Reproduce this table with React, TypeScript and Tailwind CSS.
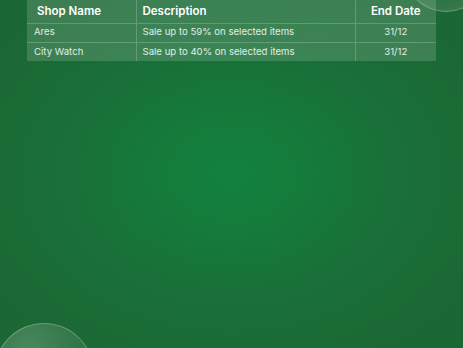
const rows = [
  { shop: "Ares", desc: "Sale up to 59% on selected items", end: "31/12" },
  { shop: "City Watch", desc: "Sale up to 40% on selected items", end: "31/12" },
];

function Bubble({ className }: { className: string }) {
  return (
    <div
      className={`absolute rounded-full border border-white/25 bg-[radial-gradient(circle_at_35%_30%,rgba(255,255,255,0.22),rgba(255,255,255,0.08)_60%,rgba(255,255,255,0.18))] ${className}`}
    />
  );
}

export default function App() {
  return (
    <div
      className="relative w-[463px] h-[348px] overflow-hidden bg-[radial-gradient(ellipse_at_50%_50%,#11813f_0%,#157c3c_20%,#197038_50%,#1c6834_85%)]"
      style={{ fontFamily: '"Inter", "Noto Sans", sans-serif' }}
    >
      <Bubble className="w-[84px] h-[84px] left-[404px] top-[-72px]" />
      <Bubble className="w-[100px] h-[100px] left-[-6px] top-[323px]" />

      <div className="relative ml-[27px] w-[409px]">
        <table className="w-full border-collapse bg-white/15 text-white">
          <thead>
            <tr className="h-[23px] border-b border-white/20">
              <th className="w-[109px] pl-[10px] pt-[1px] text-left text-[11.5px] font-semibold">
                Shop Name
              </th>
              <th className="w-[219px] border-l border-white/20 pl-[6px] pt-[1px] text-left text-[11.5px] font-semibold">
                Description
              </th>
              <th className="border-l border-white/20 pt-[1px] text-center text-[11.5px] font-semibold">
                End Date
              </th>
            </tr>
          </thead>
          <tbody>
            {rows.map((r, i) => (
              <tr
                key={r.shop}
                className={`h-[19px] ${i === 0 ? "border-b border-white/20" : ""}`}
              >
                <td className="pl-[7px] text-[9.6px] text-white/85">{r.shop}</td>
                <td className="border-l border-white/20 pl-[6px] text-[9.6px] text-white/85">
                  {r.desc}
                </td>
                <td className="border-l border-white/20 text-center text-[9.6px] text-white/85">
                  {r.end}
                </td>
              </tr>
            ))}
          </tbody>
        </table>
      </div>
    </div>
  );
}
